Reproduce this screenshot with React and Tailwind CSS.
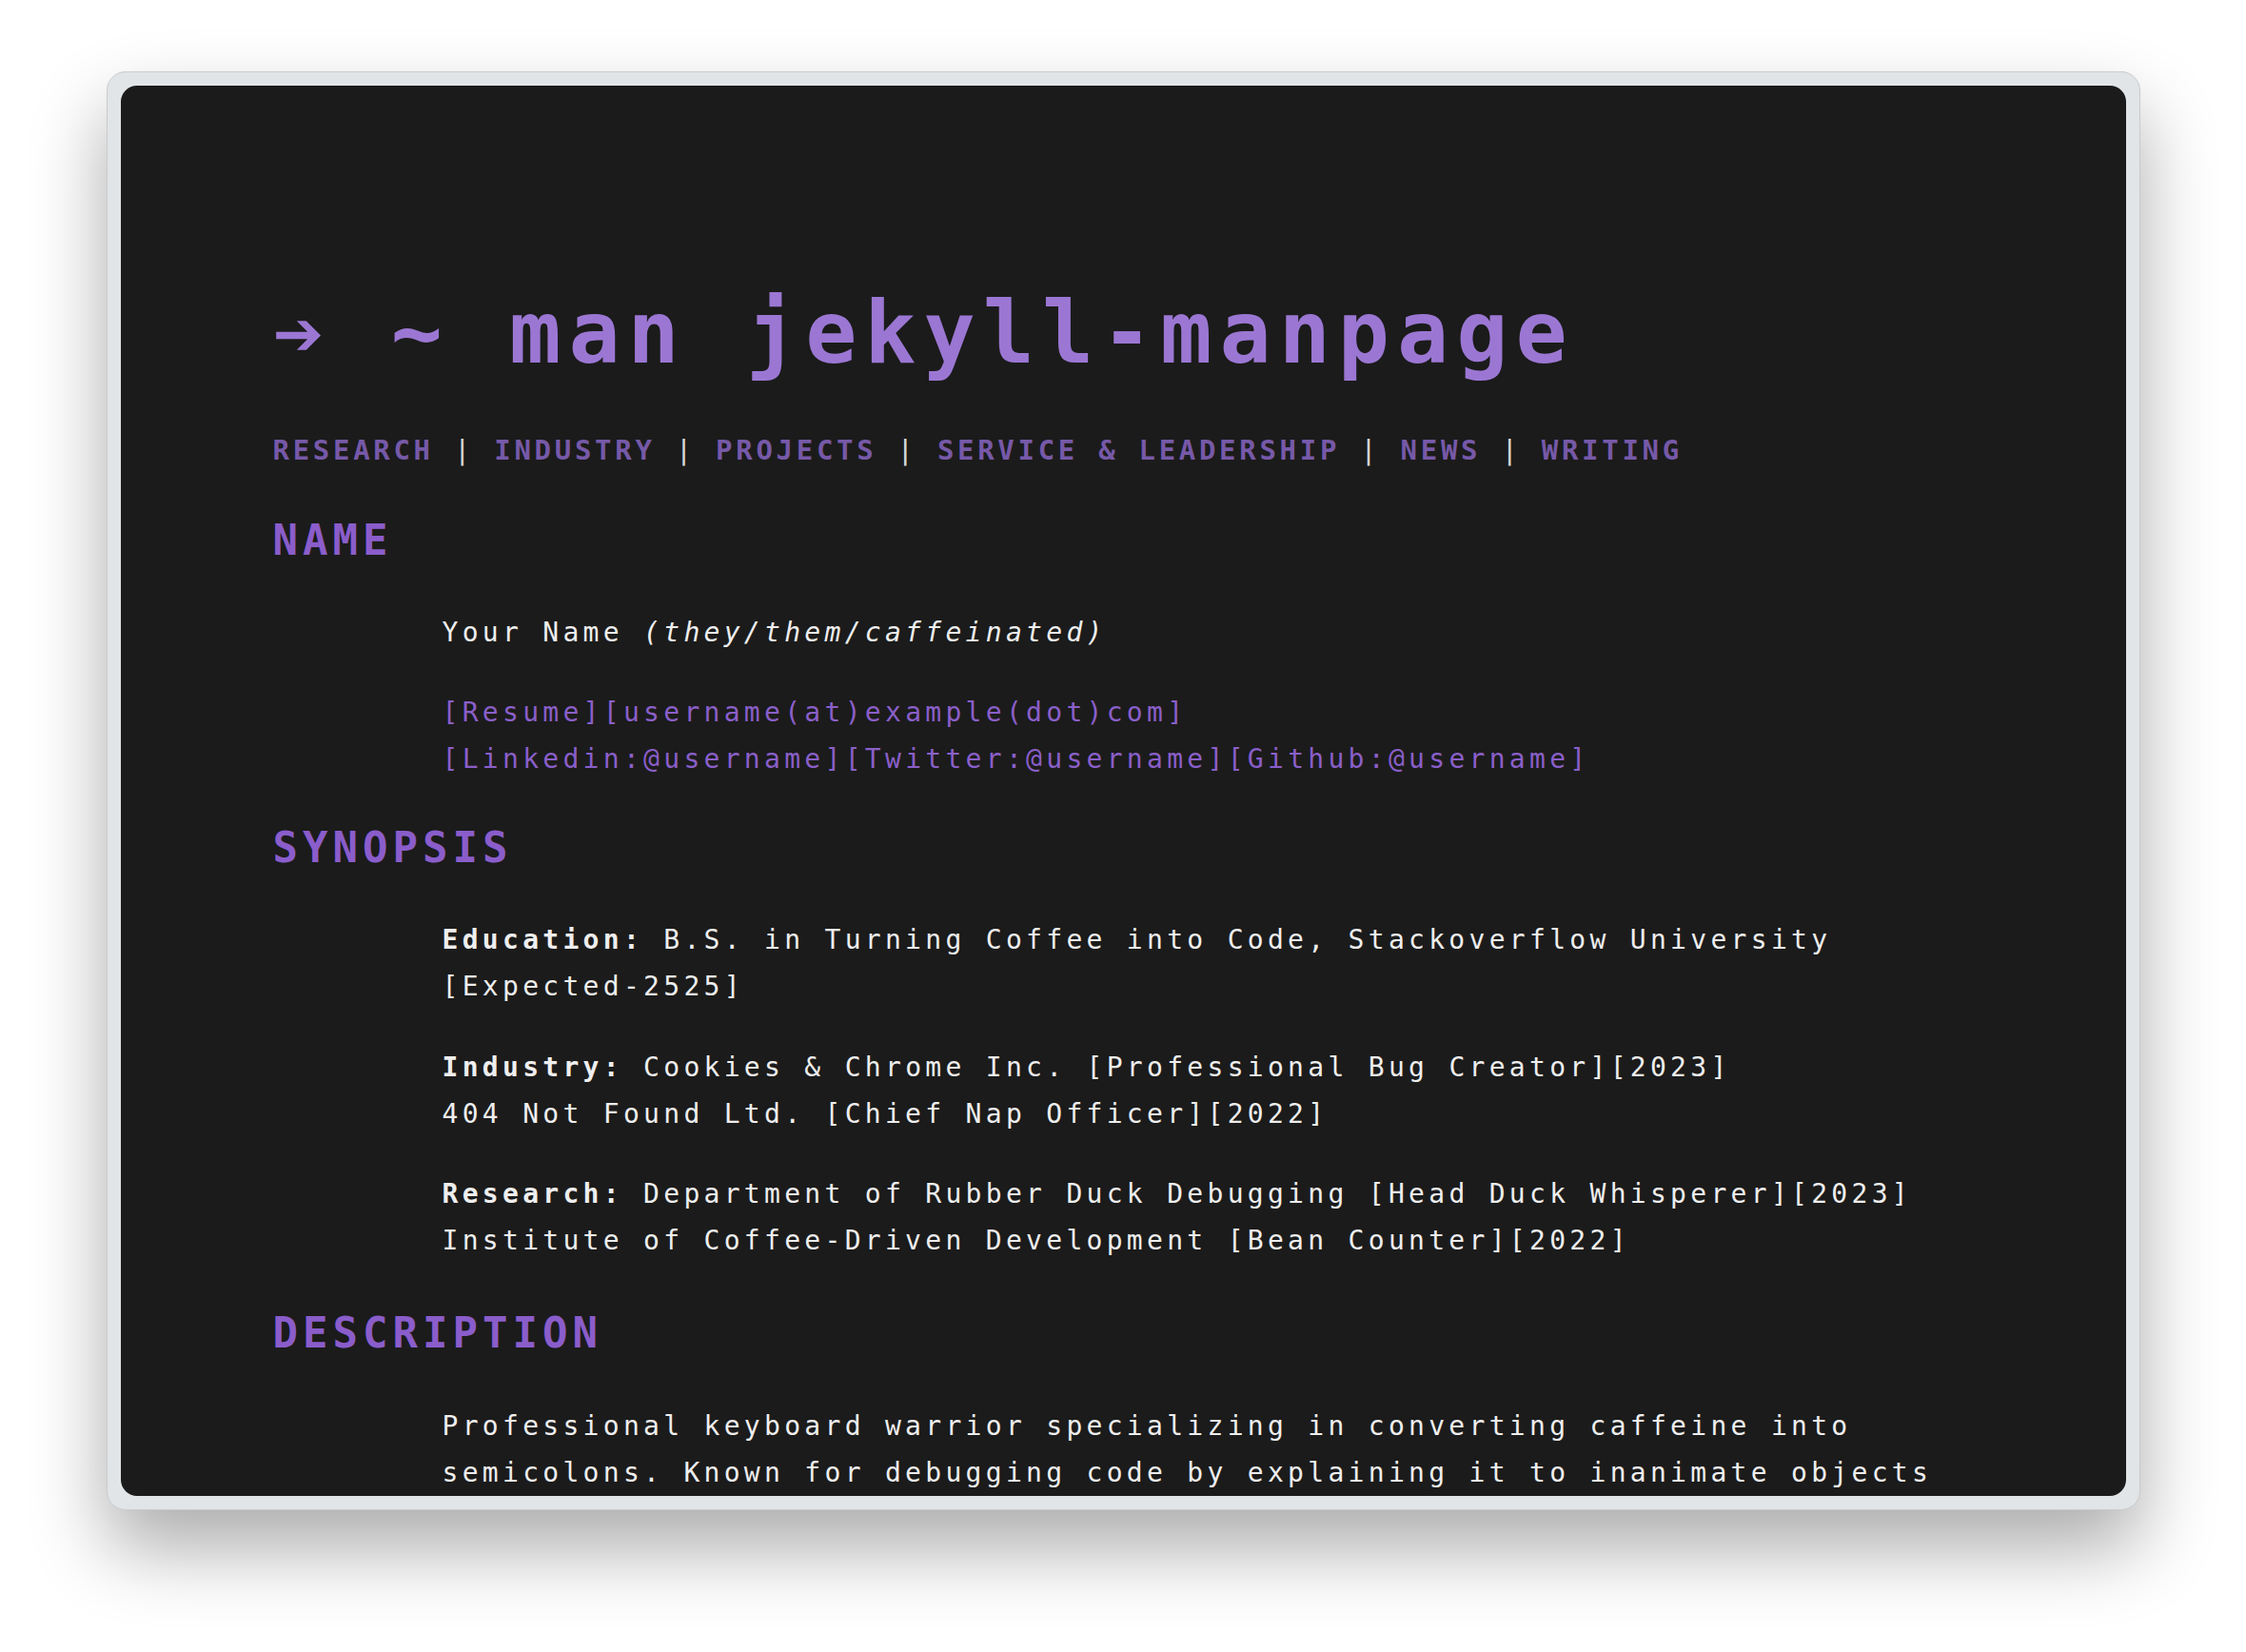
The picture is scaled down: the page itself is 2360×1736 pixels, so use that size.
const mono = "font-['DejaVu_Sans_Mono','Liberation_Mono',monospace]";

function Heading({ children }) {
    return (
        <h2 className="text-[44px] leading-[56px] font-bold tracking-[5px] text-[#8a5dcb]">
            {children}
        </h2>
    );
}

function Para({ children, className = "" }) {
    return (
        <p className={`ml-[178px] text-[28px] leading-[49px] tracking-[4.3px] text-[#eeeeee] ${className}`}>
            {children}
        </p>
    );
}

function Link({ children }) {
    return (
        <a href="#" className="text-[#8a5fc9]">
            {children}
        </a>
    );
}

export default function App() {
    const nav = ["RESEARCH", "INDUSTRY", "PROJECTS", "SERVICE & LEADERSHIP", "NEWS", "WRITING"];

    return (
        <div className="w-full h-[1736px] bg-white pt-[75px] overflow-hidden">
            {/* window frame */}
            <div className="mx-auto w-[2137px] h-[1512px] rounded-[20px] border border-[#c9cbcd] bg-[#e2e5e7] p-[14px] shadow-[0_40px_80px_rgba(0,0,0,0.33)]">
                {/* terminal panel */}
                <div className={`${mono} h-full overflow-hidden rounded-[17px] bg-[#1b1b1b] pl-[160px] pr-[160px] pt-[215px]`}>
                    <h1 className="text-[90px] leading-[90px] font-bold tracking-[8px] text-[#9b77d3] whitespace-pre">
                        ➔ ~ man jekyll-manpage
                    </h1>

                    {/* nav */}
                    <nav className="mt-[58px] text-[29px] leading-[40px] font-bold tracking-[3.7px] text-[#7659a8] whitespace-pre">
                        {nav.map((item, i) => (
                            <span key={item}>
                                {i > 0 && (
                                    <span>
                                        {" "}
                                        <span className="font-normal text-[#d6d6d6]">|</span>{" "}
                                    </span>
                                )}
                                <a href="#">{item}</a>
                            </span>
                        ))}
                    </nav>

                    <div className="mt-[47px]">
                        <Heading>NAME</Heading>
                    </div>
                    <Para className="mt-[44px]">
                        Your Name <em>(they/them/caffeinated)</em>
                    </Para>
                    <Para className="mt-[35px]">
                        <Link>[Resume]</Link>
                        <Link>[username(at)example(dot)com]</Link>
                        <br />
                        <Link>[Linkedin:@username]</Link>
                        <Link>[Twitter:@username]</Link>
                        <Link>[Github:@username]</Link>
                    </Para>

                    <div className="mt-[41px]">
                        <Heading>SYNOPSIS</Heading>
                    </div>
                    <Para className="mt-[44px]">
                        <b>Education:</b> B.S. in Turning Coffee into Code, Stackoverflow University [Expected-2525]
                    </Para>
                    <Para className="mt-[36px]">
                        <b>Industry:</b> Cookies &amp; Chrome Inc. [Professional Bug Creator][2023]
                        <br />
                        404 Not Found Ltd. [Chief Nap Officer][2022]
                    </Para>
                    <Para className="mt-[35px]">
                        <b>Research:</b> Department of Rubber Duck Debugging [Head Duck Whisperer][2023]
                        <br />
                        Institute of Coffee-Driven Development [Bean Counter][2022]
                    </Para>

                    <div className="mt-[45px]">
                        <Heading>DESCRIPTION</Heading>
                    </div>
                    <Para className="mt-[45px]">
                        Professional keyboard warrior specializing in converting caffeine into semicolons. Known for
                        debugging code by explaining it to inanimate objects
                    </Para>
                </div>
            </div>
        </div>
    );
}
